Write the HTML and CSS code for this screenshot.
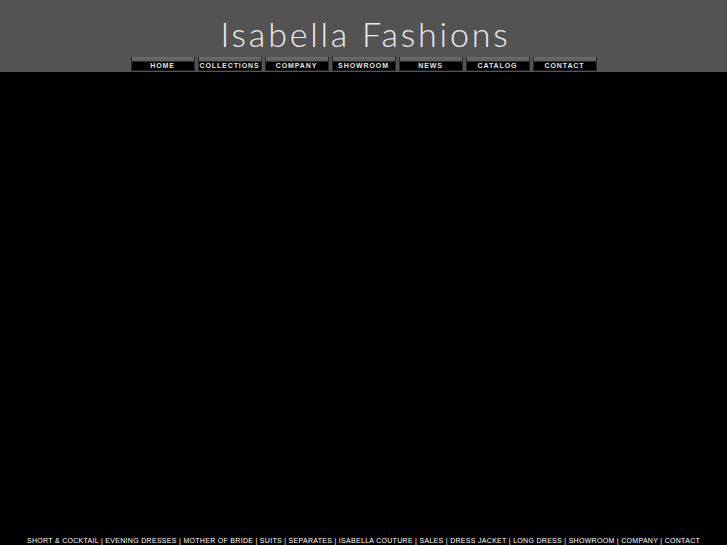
FILE: index.html
```html
<!DOCTYPE html>
<html>
<head>
<meta charset="utf-8">
<link rel="stylesheet" href="styles.css">
</head>
<body>
<div class="page">
  <header class="header">
    <h1 class="title">Isabella Fashions</h1>
    <nav class="nav">
      <a class="btn">HOME</a>
      <a class="btn">COLLECTIONS</a>
      <a class="btn">COMPANY</a>
      <a class="btn">SHOWROOM</a>
      <a class="btn">NEWS</a>
      <a class="btn">CATALOG</a>
      <a class="btn">CONTACT</a>
    </nav>
  </header>
  <main class="main"></main>
  <footer class="footer">SHORT &amp; COCKTAIL | EVENING DRESSES | MOTHER OF BRIDE | SUITS | SEPARATES | ISABELLA COUTURE | SALES | DRESS JACKET | LONG DRESS | SHOWROOM | COMPANY | CONTACT</footer>
</div>
</body>
</html>
```
FILE: styles.css
```css
html, body { margin: 0; padding: 0; background: #000; }
.page { width: 727px; height: 545px; display: flex; flex-direction: column; overflow: hidden; }
.header { height: 72px; background: #545354; display: flex; flex-direction: column; align-items: center; }
.title { margin: 14px 0 0 4px; height: 43px; font-family: "Lato", sans-serif; font-weight: 300; font-size: 34px; letter-spacing: 2.8px; color: #ececec; line-height: 40px; white-space: nowrap; }
.nav { display: flex; gap: 3px; }
.btn { width: 64px; height: 14px; box-sizing: border-box; border-left: 1px solid #2a2a2a; border-right: 1px solid #2a2a2a;
  background: linear-gradient(to bottom, #6c6c6c 0, #5e5e5e 4px, #000 5px, #000 13px, #3a3a3a 14px);
  color: #e6e6e6; font-family: "Liberation Sans", Arial, sans-serif; font-weight: bold; font-size: 7px; letter-spacing: 0.9px;
  display: flex; align-items: flex-end; justify-content: center; line-height: 9px; padding-bottom: 1px; }
.main { flex: 1; }
.footer { height: 8px; padding-top: 3px; text-align: center; color: #fff; font-family: "Liberation Sans", Arial, sans-serif; font-size: 7px; letter-spacing: 0.3px; line-height: 8px; white-space: nowrap; }
```
